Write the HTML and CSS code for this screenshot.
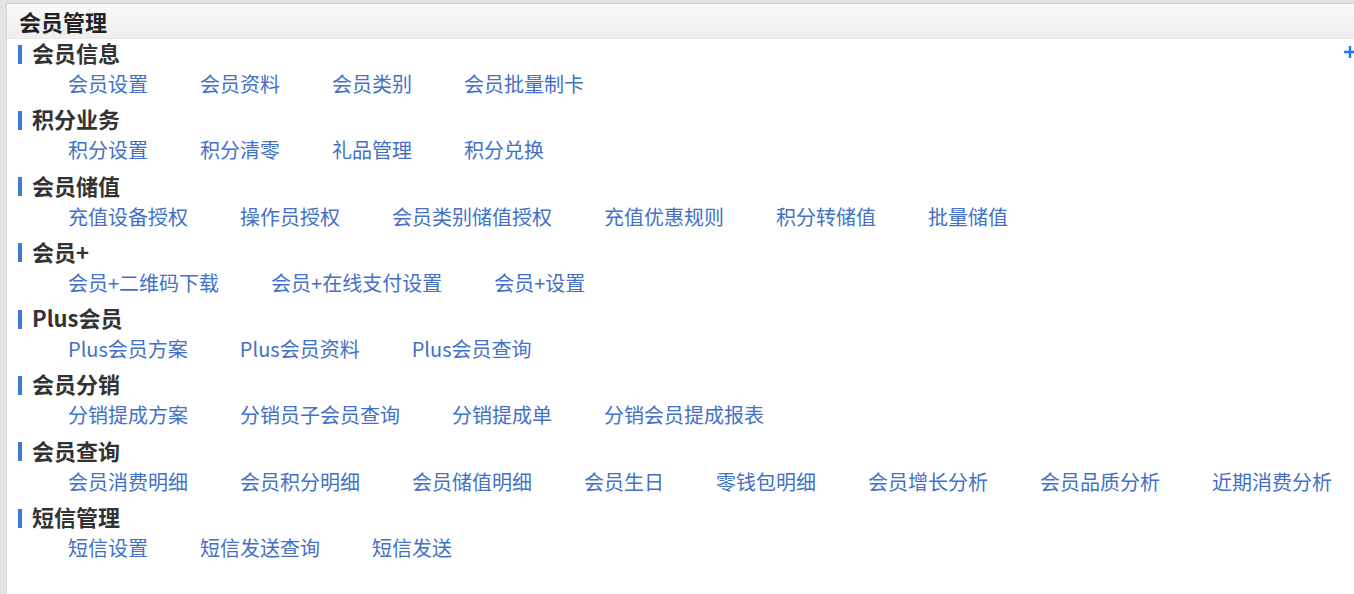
FILE: index.html
```html
<!DOCTYPE html>
<html lang="zh-CN">
<head>
<meta charset="utf-8">
<title>会员管理</title>
<link rel="stylesheet" href="styles.css">
</head>
<body>
<div class="frame">
  <div class="panel">
    <div class="header">会员管理</div>
    <div class="content">
      <div class="section">
        <div class="title"><span class="bar"></span><span class="title-text">会员信息</span>
          <svg class="plus" width="12" height="12" viewBox="0 0 12 12"><path d="M0 6H12M6 0V12" stroke="#1a7cf0" stroke-width="2.4"/></svg>
        </div>
        <div class="links"><a>会员设置</a><a>会员资料</a><a>会员类别</a><a>会员批量制卡</a></div>
      </div>
      <div class="section">
        <div class="title"><span class="bar"></span><span class="title-text">积分业务</span></div>
        <div class="links"><a>积分设置</a><a>积分清零</a><a>礼品管理</a><a>积分兑换</a></div>
      </div>
      <div class="section">
        <div class="title"><span class="bar"></span><span class="title-text">会员储值</span></div>
        <div class="links"><a>充值设备授权</a><a>操作员授权</a><a>会员类别储值授权</a><a>充值优惠规则</a><a>积分转储值</a><a>批量储值</a></div>
      </div>
      <div class="section">
        <div class="title"><span class="bar"></span><span class="title-text">会员+</span></div>
        <div class="links"><a>会员+二维码下载</a><a>会员+在线支付设置</a><a>会员+设置</a></div>
      </div>
      <div class="section">
        <div class="title"><span class="bar"></span><span class="title-text">Plus会员</span></div>
        <div class="links"><a>Plus会员方案</a><a>Plus会员资料</a><a>Plus会员查询</a></div>
      </div>
      <div class="section">
        <div class="title"><span class="bar"></span><span class="title-text">会员分销</span></div>
        <div class="links"><a>分销提成方案</a><a>分销员子会员查询</a><a>分销提成单</a><a>分销会员提成报表</a></div>
      </div>
      <div class="section">
        <div class="title"><span class="bar"></span><span class="title-text">会员查询</span></div>
        <div class="links"><a>会员消费明细</a><a>会员积分明细</a><a>会员储值明细</a><a>会员生日</a><a>零钱包明细</a><a>会员增长分析</a><a>会员品质分析</a><a>近期消费分析</a></div>
      </div>
      <div class="section">
        <div class="title"><span class="bar"></span><span class="title-text">短信管理</span></div>
        <div class="links"><a>短信设置</a><a>短信发送查询</a><a>短信发送</a></div>
      </div>
    </div>
  </div>
</div>
</body>
</html>
```
FILE: styles.css
```css
html, body {
  margin: 0;
  padding: 0;
  width: 1354px;
  height: 594px;
  overflow: hidden;
  font-family: "Noto Sans CJK SC", "Noto Sans", sans-serif;
}
.frame {
  width: 1354px;
  height: 594px;
  box-sizing: border-box;
  background: #e4e4e4;
  padding: 3px 0 0 6px;
  overflow: hidden;
}
.panel {
  height: 100%;
  background: #fff;
  border-left: 1px solid #d6d6d6;
  border-top: 1px solid #d0d0d0;
  box-sizing: border-box;
  overflow: hidden;
}
.header {
  height: 34px;
  line-height: 34px;
  padding-left: 12px;
  font-size: 22px;
  font-weight: bold;
  color: #222;
  background: linear-gradient(#f9f9f9, #eeeeee);
  border-bottom: 1px solid #e8e8e8;
}
.content {
  padding-left: 11px;
}
.section {
  margin-bottom: 6.3px;
}
.title {
  display: flex;
  align-items: center;
  height: 30px;
}
.bar {
  width: 4px;
  height: 19px;
  background: #3d7ad8;
  margin-right: 10px;
}
.title-text {
  font-size: 22px;
  font-weight: bold;
  color: #333;
  line-height: 27px;
  padding-bottom: 3px;
}
.plus {
  margin-left: auto;
  margin-right: -2px;
  margin-bottom: 5px;
  flex: none;
}
.links {
  display: flex;
  padding-left: 50px;
  height: 30px;
  line-height: 30px;
}
.links a {
  font-size: 20px;
  color: #4470c6;
  margin-right: 52px;
  white-space: nowrap;
  cursor: pointer;
}
```
